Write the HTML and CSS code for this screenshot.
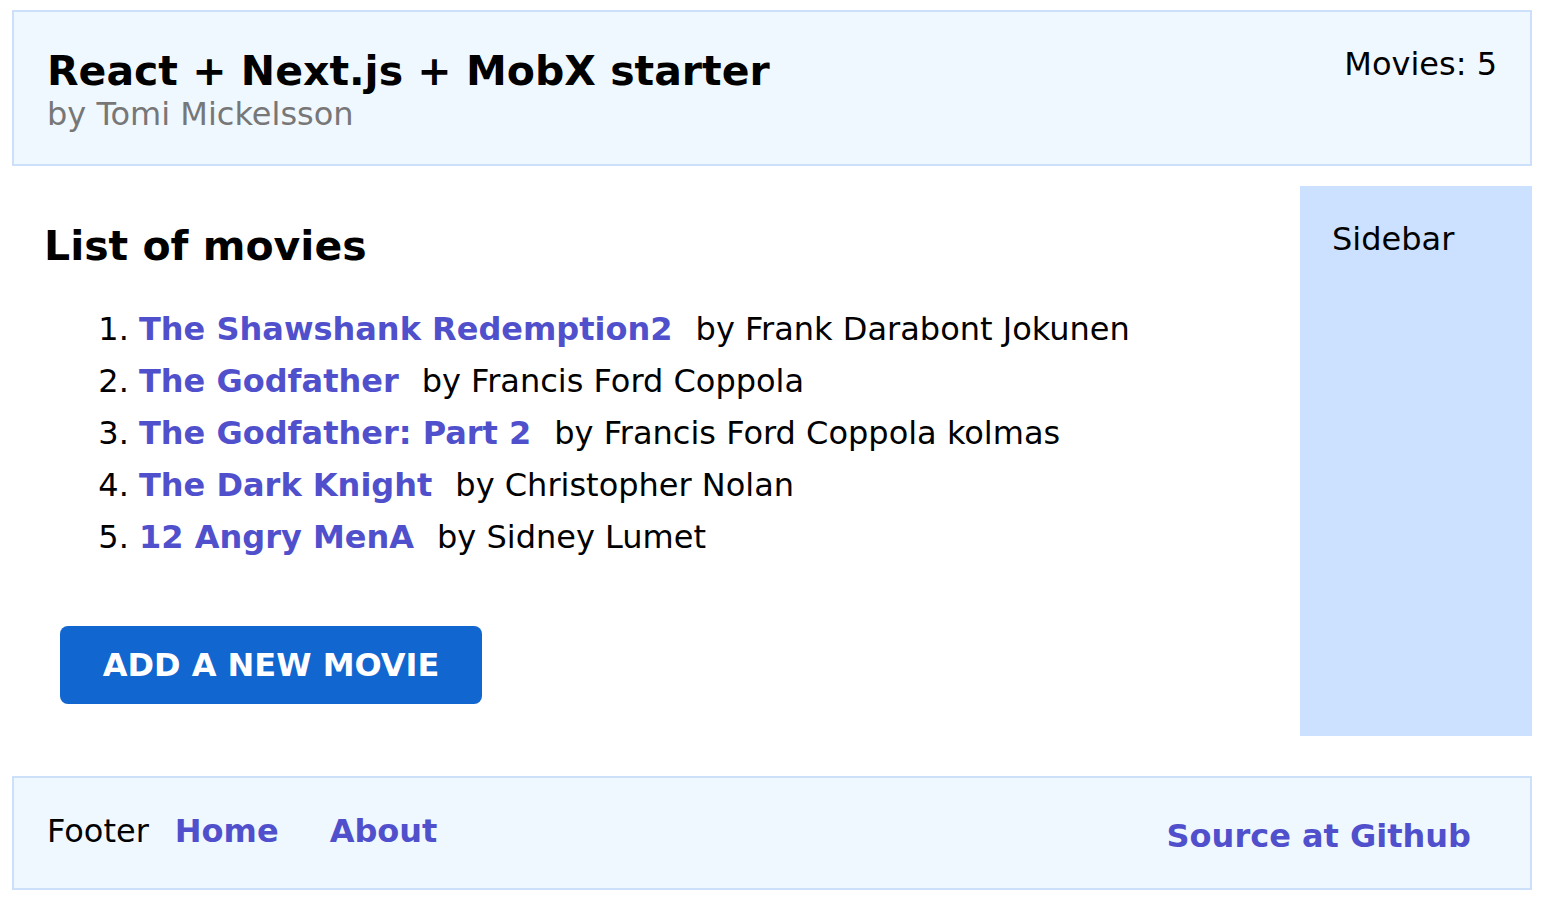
FILE: index.html
```html
<!DOCTYPE html>
<html lang="en">
<head>
<meta charset="utf-8">
<title>React + Next.js + MobX starter</title>
<link rel="stylesheet" href="styles.css">
</head>
<body>
<div class="page">
  <header class="header">
    <div class="brand">
      <h1 class="title">React + Next.js + MobX starter</h1>
      <div class="subtitle">by Tomi Mickelsson</div>
    </div>
    <div class="count">Movies: 5</div>
  </header>
  <div class="body-row">
    <main class="main">
      <h2 class="heading">List of movies</h2>
      <ol class="movies">
        <li><a href="#" class="movie-link">The Shawshank Redemption2</a><span class="by">by Frank Darabont Jokunen</span></li>
        <li><a href="#" class="movie-link">The Godfather</a><span class="by">by Francis Ford Coppola</span></li>
        <li><a href="#" class="movie-link">The Godfather: Part 2</a><span class="by">by Francis Ford Coppola kolmas</span></li>
        <li><a href="#" class="movie-link">The Dark Knight</a><span class="by">by Christopher Nolan</span></li>
        <li><a href="#" class="movie-link">12 Angry MenA</a><span class="by">by Sidney Lumet</span></li>
      </ol>
      <button class="add-btn" type="button">ADD A NEW MOVIE</button>
    </main>
    <aside class="sidebar">Sidebar</aside>
  </div>
  <footer class="footer">
    <div class="footer-left">
      <span class="footer-label">Footer</span>
      <a href="#" class="nav-link nav-home">Home</a>
      <a href="#" class="nav-link nav-about">About</a>
    </div>
    <a href="#" class="nav-link source">Source at Github</a>
  </footer>
</div>
</body>
</html>
```
FILE: styles.css
```css
html, body {
  margin: 0;
  padding: 0;
  background: #ffffff;
}
body {
  font-family: "DejaVu Sans", Verdana, sans-serif;
  font-size: 32px;
  color: #000;
}
.page {
  padding: 10px 16px 0 12px;
}
a {
  color: #5050cc;
  text-decoration: none;
  font-weight: bold;
}
.header {
  display: flex;
  justify-content: space-between;
  align-items: flex-start;
  background: #f0f8ff;
  border: 2px solid #cce0fa;
  padding: 35px 33px 31px 33px;
}
.title {
  margin: 0;
  font-size: 41px;
  line-height: 48px;
  font-weight: bold;
}
.subtitle {
  font-size: 32px;
  line-height: 38px;
  color: #777777;
}
.count {
  font-size: 32px;
  line-height: 38px;
  margin-top: -2px;
}
.body-row {
  display: flex;
  align-items: flex-start;
}
.main {
  flex: 1;
  padding: 56px 0 0 32px;
}
.heading {
  margin: 0;
  font-size: 41px;
  line-height: 48px;
  font-weight: bold;
}
.movies {
  margin: 33px 0 0 0;
  padding-left: 95px;
  line-height: 52px;
}
.by {
  margin-left: 23px;
}
.add-btn {
  margin: 63px 0 0 16px;
  width: 422px;
  height: 78px;
  padding: 0;
  border: none;
  border-radius: 8px;
  background: #1166cf;
  color: #ffffff;
  font-family: "DejaVu Sans", Verdana, sans-serif;
  font-size: 32px;
  font-weight: bold;
  line-height: 38px;
}
.sidebar {
  width: 200px;
  height: 516px;
  margin: 20px 0 40px 0;
  padding: 34px 0 0 32px;
  background: #cce0ff;
  line-height: 38px;
}
.footer {
  display: flex;
  justify-content: space-between;
  align-items: flex-start;
  background: #f0f8ff;
  border: 2px solid #cce0fa;
  padding: 34px 59px 33px 33px;
  line-height: 38px;
}
.footer-left {
  display: flex;
}
.nav-home {
  margin-left: 26px;
}
.nav-about {
  margin-left: 51px;
}
.source {
  margin-top: 5px;
}
```
